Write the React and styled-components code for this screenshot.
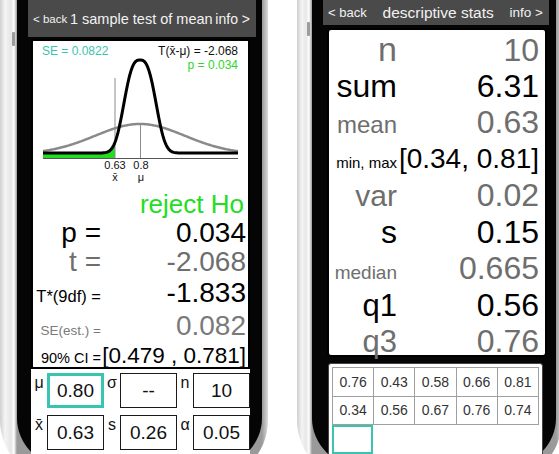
import React from "react";
import styled, { createGlobalStyle } from "styled-components";

const GlobalStyle = createGlobalStyle`
  html, body {
    margin: 0;
    padding: 0;
    background: #ffffff;
  }
  body {
    font-family: "Liberation Sans", Arial, sans-serif;
    color: #000;
  }
`;

const TEAL = "#38c4b0";
const GREEN = "#22dd22";
const GRAY = "#6e6e6e";

const Page = styled.div`
  width: 559px;
  height: 454px;
  overflow: hidden;
  display: flex;
  gap: 29px;
  align-items: flex-start;
`;

const Phone = styled.div`
  position: relative;
  flex: none;
  display: flex;
  width: ${(p) => p.$w}px;
  height: 482px;
  box-sizing: border-box;
  padding: 0 ${(p) => p.$pr}px 16px ${(p) => p.$pl}px;
  border-radius: 0 0 62px 62px;
  background: linear-gradient(
    to right,
    #cfcfcf 0,
    #f4f4f4 5px,
    #e6e6e6 ${(p) => p.$pl - 6}px,
    #ffffff ${(p) => p.$pl - 3}px,
    #9a9a9a ${(p) => p.$pl}px,
    #9a9a9a calc(100% - ${(p) => p.$pr}px),
    #dcdcdc 100%
  );

  &::before {
    content: "";
    position: absolute;
    left: ${(p) => p.$pl - 5}px;
    top: ${(p) => p.$btn}px;
    width: 3px;
    height: 14px;
    border-radius: 1px;
    background: #9c9c9c;
  }
`;

const Shell = styled.div`
  flex: 1;
  display: flex;
  flex-direction: column;
  min-width: 0;
  background: #050505;
  padding: 0 ${(p) => p.$pr}px 0 ${(p) => p.$pl}px;
  border-radius: 0 0 48px 48px;
`;

const NavBar = styled.div`
  flex: none;
  height: ${(p) => p.$h}px;
  display: flex;
  align-items: center;
  justify-content: space-between;
  padding: 0 6px 0 5px;
  background: #4a4a4a;
  color: #f2f2f2;
  white-space: nowrap;
`;

const NavText = styled.span`
  font-size: ${(p) => p.$size}px;
`;

/* ---------- left phone ---------- */

const TestBody = styled.div`
  flex: 1;
  display: flex;
  flex-direction: column;
  margin: 2px 6px 0 3px;
  background: #fff;
`;

const ResultCard = styled.div`
  flex: none;
  height: 330px;
  box-sizing: border-box;
  border: 2px solid #000;
  display: flex;
  flex-direction: column;
  overflow: hidden;
`;

const Chart = styled.div`
  position: relative;
  flex: none;
  height: 148px;

  svg {
    display: block;
  }
`;

const Legend = styled.div`
  position: absolute;
  top: 4px;
  left: 9px;
  right: 10px;
  display: flex;
  justify-content: space-between;
  font-size: 12px;
  line-height: 13.5px;
`;

const LegendRight = styled.div`
  text-align: right;
`;

const Tinted = styled.div`
  color: ${(p) => p.$c};
`;

const Verdict = styled.div`
  height: 30px;
  line-height: 30px;
  text-align: right;
  padding-right: 4px;
  font-size: 26px;
  color: ${GREEN};
`;

const StatRow = styled.div`
  display: grid;
  grid-template-columns: ${(p) => p.$lw}px 1fr;
  align-items: baseline;
  height: ${(p) => p.$h}px;
  line-height: ${(p) => p.$h}px;
  padding-right: ${(p) => p.$pr}px;
  white-space: nowrap;
`;

const StatLabel = styled.span`
  text-align: right;
  font-size: ${(p) => p.$size}px;
  color: ${(p) => p.$c};
`;

const StatValue = styled.span`
  text-align: right;
  font-size: ${(p) => p.$size}px;
  color: ${(p) => p.$c};
`;

const InputGrid = styled.div`
  display: grid;
  grid-template-columns: repeat(3, 16px 57px);
  row-gap: 7px;
  padding-top: 4px;
`;

const ParamLabel = styled.span`
  align-self: start;
  text-align: center;
  font-size: 16px;
  line-height: 16px;
  padding-top: 2px;
  color: #111;
`;

const ParamBox = styled.div`
  height: 35px;
  box-sizing: border-box;
  border: ${(p) => (p.$active ? `3px solid ${TEAL}` : "1.5px solid #1a1a1a")};
  display: flex;
  align-items: center;
  justify-content: center;
  font-size: 19px;
  color: #111;
`;

/* ---------- right phone ---------- */

const StatsCard = styled.div`
  flex: none;
  height: 329px;
  box-sizing: border-box;
  margin: 3px 2px 0 4px;
  padding-top: 1px;
  background: #fff;
  border: 2px solid #000;
  border-radius: 4px;
`;

const DataTable = styled.div`
  flex: 1;
  margin: 6px 6px 0 5px;
  padding: 3px;
  background: #fff;
  border: 1.5px solid #444;
  border-radius: 3px;
`;

const CellGrid = styled.div`
  display: grid;
  grid-template-columns: repeat(5, 1fr);
  border-top: 1px solid #a0a0a0;
  border-left: 1px solid #a0a0a0;
`;

const Cell = styled.div`
  height: 27.5px;
  display: flex;
  align-items: center;
  justify-content: center;
  border-right: 1px solid #a0a0a0;
  border-bottom: 1px solid #a0a0a0;
  font-size: 14px;
  color: #333;
`;

const EntryCell = styled.div`
  width: 41px;
  height: 29px;
  box-sizing: border-box;
  border: 2px solid ${TEAL};
`;

/* ---------- chart ---------- */

const range = (a, b) => Array.from({ length: b - a + 1 }, (_, i) => a + i);

const tight = (x) => 153 - 93 * Math.exp(-Math.pow(Math.abs(x - 140) / 19, 2.8));
const wide = (x) => 154 - 30 * Math.exp(-((x - 140) ** 2) / (2 * 45 * 45));

const pts = (fn, a, b) => range(a, b).map((x) => `${x},${fn(x).toFixed(2)}`).join(" ");

const TailChart = () => (
  <svg width="215" height="148" viewBox="33 41 215 148">
    <polygon points={`43,158 ${pts(tight, 43, 115)} 115,158`} fill="#22dd22" />
    <line x1="115" y1="78" x2="115" y2="158" stroke="#8c8c8c" strokeWidth="1" />
    <line x1="140.5" y1="124" x2="140.5" y2="158" stroke="#8c8c8c" strokeWidth="1" />
    <polyline points={pts(wide, 43, 238)} fill="none" stroke="#8a8a8a" strokeWidth="2.5" />
    <polyline points={pts(tight, 43, 238)} fill="none" stroke="#000" strokeWidth="3" strokeLinejoin="round" />
    <line x1="43" y1="158.5" x2="238" y2="158.5" stroke="#555" strokeWidth="1.2" />
    <g fontFamily="Liberation Sans, Arial, sans-serif" fontSize="11" textAnchor="middle" fill="#111">
      <text x="115" y="169">0.63</text>
      <text x="115" y="181">x̄</text>
      <text x="141" y="169">0.8</text>
      <text x="141" y="181">μ</text>
    </g>
  </svg>
);

/* ---------- data ---------- */

const testRows = [
  { label: "p =", ls: 28, lc: "#000", value: "0.034", vc: "#000", h: 28 },
  { label: "t =", ls: 28, lc: GRAY, value: "-2.068", vc: GRAY, h: 30 },
  { label: "T*(9df) =", ls: 16.5, lc: "#000", value: "-1.833", vc: "#000", h: 32 },
  { label: "SE(est.) =", ls: 13.5, lc: "#7a7a7a", value: "0.082", vc: "#7a7a7a", h: 33 },
  { label: "90% CI =", ls: 14.5, lc: "#000", value: "[0.479 , 0.781]", vc: "#000", h: 27, vs: 22.5 },
];

const params = [
  { sym: "μ", value: "0.80", active: true },
  { sym: "σ", value: "--" },
  { sym: "n", value: "10" },
  { sym: "x̄", value: "0.63" },
  { sym: "s", value: "0.26" },
  { sym: "α", value: "0.05" },
];

const descRows = [
  { label: "n", ls: 34, lc: GRAY, value: "10", vc: GRAY },
  { label: "sum", ls: 32, lc: "#000", value: "6.31", vc: "#000" },
  { label: "mean", ls: 24, lc: GRAY, value: "0.63", vc: GRAY },
  { label: "min, max", ls: 15, lc: "#000", value: "[0.34, 0.81]", vc: "#000", vs: 28 },
  { label: "var", ls: 30, lc: GRAY, value: "0.02", vc: GRAY },
  { label: "s", ls: 32, lc: "#000", value: "0.15", vc: "#000" },
  { label: "median", ls: 19, lc: GRAY, value: "0.665", vc: GRAY },
  { label: "q1", ls: 31, lc: "#000", value: "0.56", vc: "#000" },
  { label: "q3", ls: 31, lc: GRAY, value: "0.76", vc: GRAY },
];

const samples = ["0.76", "0.43", "0.58", "0.66", "0.81", "0.34", "0.56", "0.67", "0.76", "0.74"];

const App = () => {
  return (
    <>
      <GlobalStyle />
      <Page>
        <Phone $w={268} $pl={17} $pr={6} $btn={32}>
          <Shell $pl={11} $pr={6}>
            <NavBar $h={37}>
              <NavText $size={11.5}>&lt; back</NavText>
              <NavText $size={14.5}>1 sample test of mean</NavText>
              <NavText $size={14}>info &gt;</NavText>
            </NavBar>
            <TestBody>
              <ResultCard>
                <Chart>
                  <TailChart />
                  <Legend>
                    <Tinted $c={TEAL}>SE = 0.0822</Tinted>
                    <LegendRight>
                      <Tinted $c="#111">T(x̄-μ) = -2.068</Tinted>
                      <Tinted $c="#2fd62f">p = 0.034</Tinted>
                    </LegendRight>
                  </Legend>
                </Chart>
                <Verdict>reject Ho</Verdict>
                {testRows.map((r) => (
                  <StatRow key={r.label} $lw={68} $h={r.h} $pr={2}>
                    <StatLabel $size={r.ls} $c={r.lc}>{r.label}</StatLabel>
                    <StatValue $size={r.vs || 28} $c={r.vc}>{r.value}</StatValue>
                  </StatRow>
                ))}
              </ResultCard>
              <InputGrid>
                {params.map((p) => (
                  <React.Fragment key={p.sym}>
                    <ParamLabel>{p.sym}</ParamLabel>
                    <ParamBox $active={p.active}>{p.value}</ParamBox>
                  </React.Fragment>
                ))}
              </InputGrid>
            </TestBody>
          </Shell>
        </Phone>

        <Phone $w={265} $pl={15} $pr={6} $btn={22}>
          <Shell $pl={11} $pr={7}>
            <NavBar $h={25}>
              <NavText $size={13}>&lt; back</NavText>
              <NavText $size={15.5}>descriptive stats</NavText>
              <NavText $size={13.5}>info &gt;</NavText>
            </NavBar>
            <StatsCard>
              {descRows.map((r) => (
                <StatRow key={r.label} $lw={68} $h={36.5} $pr={6}>
                  <StatLabel $size={r.ls} $c={r.lc}>{r.label}</StatLabel>
                  <StatValue $size={r.vs || 32} $c={r.vc}>{r.value}</StatValue>
                </StatRow>
              ))}
            </StatsCard>
            <DataTable>
              <CellGrid>
                {samples.map((v, i) => (
                  <Cell key={i}>{v}</Cell>
                ))}
              </CellGrid>
              <EntryCell />
            </DataTable>
          </Shell>
        </Phone>
      </Page>
    </>
  );
};

export default App;
